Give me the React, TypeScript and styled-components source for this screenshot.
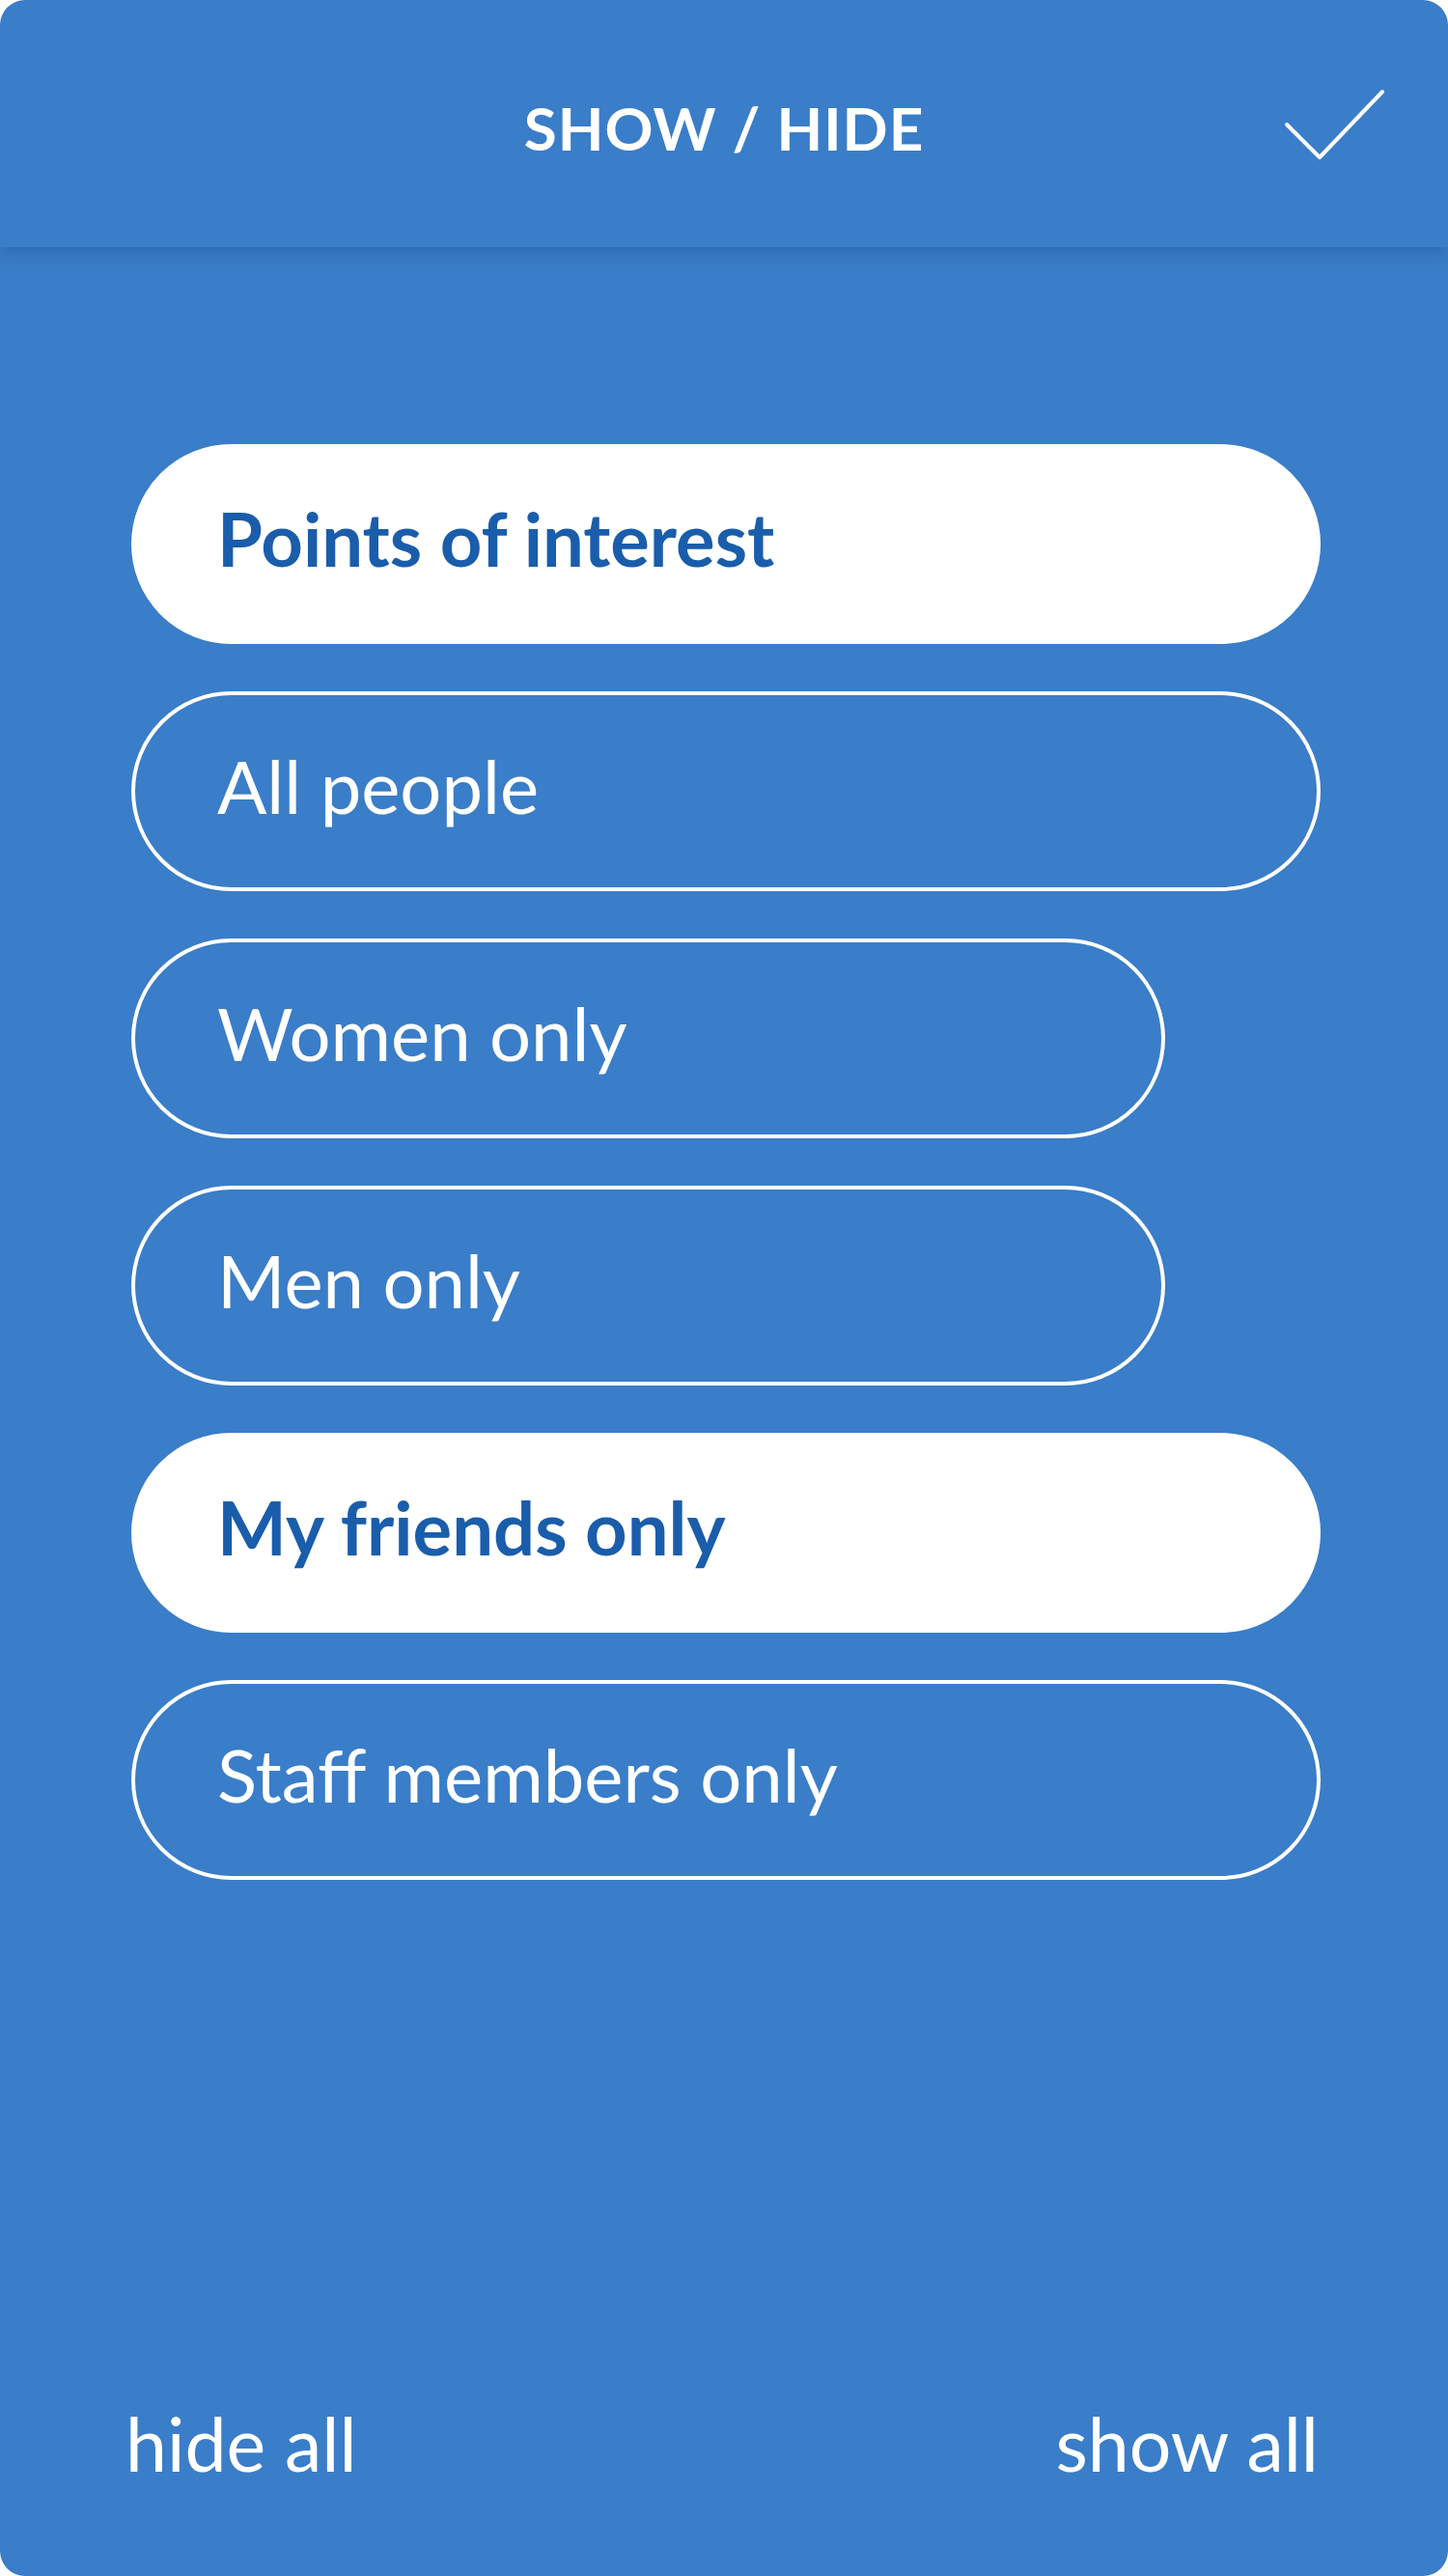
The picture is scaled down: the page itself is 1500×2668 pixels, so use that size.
import React, { useState } from 'react';
import styled, { createGlobalStyle } from 'styled-components';

const Color = {
  blue: '#3a7dc8',
  deepBlue: '#1a5dab',
  white: '#ffffff'
};

const font = `Lato, 'Open Sans', sans-serif`;

const GlobalStyle = createGlobalStyle`
  html, body {
    margin: 0;
    padding: 0;
    background: ${Color.white};
  }
  * {
    box-sizing: border-box;
  }
`;

const Panel = styled.div`
  width: 1500px;
  height: 2668px;
  background: ${Color.blue};
  border-radius: 26px;
  overflow: hidden;
  display: flex;
  flex-direction: column;
  font-family: ${font};
  color: ${Color.white};
`;

const Header = styled.header`
  height: 256px;
  flex-shrink: 0;
  display: flex;
  align-items: center;
  justify-content: center;
  position: relative;
  box-shadow: 0 4px 18px rgba(20, 60, 110, 0.35);
  z-index: 1;
`;

const Title = styled.h1`
  margin: 0;
  font-size: 62px;
  font-weight: 700;
  letter-spacing: 1px;
  padding-top: 8px;
`;

const DoneButton = styled.button`
  position: absolute;
  right: 64px;
  top: 88px;
  width: 112px;
  height: 84px;
  padding: 0;
  border: 0;
  background: none;
  cursor: pointer;
`;

const FilterList = styled.ul`
  list-style: none;
  margin: 0;
  padding: 204px 132px 0 136px;
  display: flex;
  flex-direction: column;
  align-items: flex-start;
  gap: 49px;
`;

const FilterPill = styled.li<{ $active: boolean; $short?: boolean }>`
  width: ${p => (p.$short ? '1071px' : '1232px')};
  height: 207px;
  flex-shrink: 0;
  border-radius: 9999px;
  display: flex;
  align-items: center;
  padding: 0 0 12px 85px;
  font-size: 76px;
  cursor: pointer;
  border: 4px solid ${Color.white};
  background: ${p => (p.$active ? Color.white : 'transparent')};
  color: ${p => (p.$active ? Color.deepBlue : Color.white)};
  font-weight: ${p => (p.$active ? 700 : 400)};
`;

const Footer = styled.footer`
  margin-top: auto;
  display: flex;
  justify-content: space-between;
  padding: 0 134px 92px 130px;
`;

const FooterLink = styled.button`
  border: 0;
  background: none;
  padding: 0;
  font-family: ${font};
  font-size: 77px;
  line-height: 1.2;
  color: ${Color.white};
  cursor: pointer;
`;

const filters = [
  { id: 'poi', label: 'Points of interest', active: true },
  { id: 'all', label: 'All people', active: false },
  { id: 'women', label: 'Women only', active: false, short: true },
  { id: 'men', label: 'Men only', active: false, short: true },
  { id: 'friends', label: 'My friends only', active: true },
  { id: 'staff', label: 'Staff members only', active: false }
];

const CheckIcon = () => (
  <svg width="112" height="84" viewBox="1320 86 112 84" fill="none">
    <polyline
      points="1329,127 1363,161 1428,93"
      stroke="#fff"
      strokeWidth="4"
      strokeLinecap="round"
      strokeLinejoin="round"
    />
  </svg>
);

const App = () => {
  const [active, setActive] = useState<Record<string, boolean>>(
    Object.fromEntries(filters.map(f => [f.id, f.active]))
  );

  const setAll = (value: boolean) =>
    setActive(Object.fromEntries(filters.map(f => [f.id, value])));

  return (
    <>
      <GlobalStyle />
      <Panel>
        <Header>
          <Title>SHOW / HIDE</Title>
          <DoneButton aria-label="Done">
            <CheckIcon />
          </DoneButton>
        </Header>
        <FilterList>
          {filters.map(filter => (
            <FilterPill
              key={filter.id}
              $active={active[filter.id]}
              $short={filter.short}
              onClick={() =>
                setActive({ ...active, [filter.id]: !active[filter.id] })
              }
            >
              {filter.label}
            </FilterPill>
          ))}
        </FilterList>
        <Footer>
          <FooterLink onClick={() => setAll(false)}>hide all</FooterLink>
          <FooterLink onClick={() => setAll(true)}>show all</FooterLink>
        </Footer>
      </Panel>
    </>
  );
};

export default App;
